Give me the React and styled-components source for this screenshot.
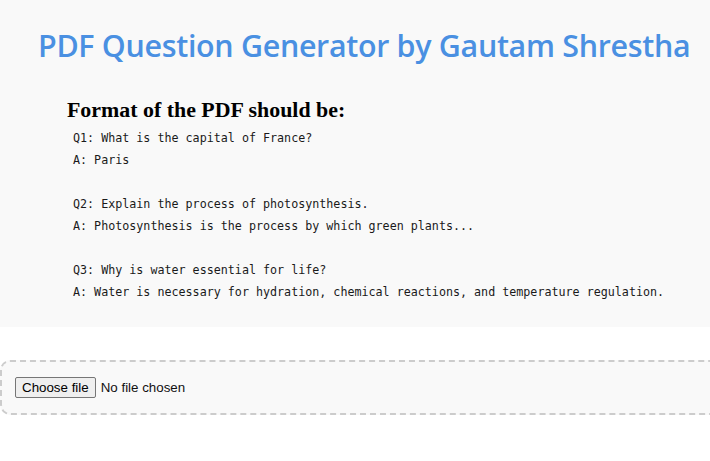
import React from 'react'
import styled, { createGlobalStyle } from 'styled-components'

const GlobalStyle = createGlobalStyle`
  html, body {
    margin: 0;
    padding: 0;
    background: #ffffff;
    overflow-x: hidden;
  }
`

const sample = `Q1: What is the capital of France?
A: Paris

Q2: Explain the process of photosynthesis.
A: Photosynthesis is the process by which green plants...

Q3: Why is water essential for life?
A: Water is necessary for hydration, chemical reactions, and temperature regulation.`

function App() {
  return (
    <Page>
      <GlobalStyle />
      <Header>
        <Title>PDF Question Generator by Gautam Shrestha</Title>
        <Format>
          <FormatHeading>Format of the PDF should be:</FormatHeading>
          <Sample>{sample}</Sample>
        </Format>
      </Header>

      <UploadBox>
        <FilePicker>
          <HiddenInput type="file" accept="application/pdf" />
          <ChooseButton>Choose file</ChooseButton>
          <FileStatus>No file chosen</FileStatus>
        </FilePicker>
      </UploadBox>
    </Page>
  )
}

export default App

const Page = styled.div`
  width: 100%;
`

const Header = styled.header`
  background: #f9f9f9;
  padding: 24px 0 24px;
`

const Title = styled.h1`
  margin: 0 0 0 38px;
  font-family: "Open Sans", "Noto Sans", sans-serif;
  font-weight: 600;
  font-size: 30.4px;
  letter-spacing: -0.3px;
  line-height: 44px;
  color: #4a90e2;
  white-space: nowrap;
`

const Format = styled.div`
  margin: 29px 0 0 67px;
`

const FormatHeading = styled.h3`
  margin: 0;
  font-family: "Liberation Serif", "Times New Roman", serif;
  font-weight: bold;
  font-size: 21.9px;
  line-height: 26px;
  color: #000;
`

const Sample = styled.pre`
  margin: 4px 0 0 6px;
  font-family: "DejaVu Sans Mono", "Liberation Mono", monospace;
  font-size: 11.7px;
  line-height: 22px;
  color: #1a1a1a;
`

const UploadBox = styled.div`
  margin: 33px -30px 0 0;
  padding: 15px 13px;
  border: 2px dashed #cccccc;
  border-radius: 10px;
  background: #f9f9f9;
`

const FilePicker = styled.label`
  display: inline-flex;
  align-items: center;
  gap: 5px;
  cursor: pointer;
  font-family: "Liberation Sans", Arial, sans-serif;
  font-size: 13.33px;
  color: #111;
`

const HiddenInput = styled.input`
  display: none;
`

const ChooseButton = styled.span`
  display: inline-flex;
  align-items: center;
  height: 19px;
  padding: 0 6px;
  border: 1px solid #767676;
  border-radius: 2px;
  background: #efefef;
  color: #000;
`

const FileStatus = styled.span`
  color: #111;
`
